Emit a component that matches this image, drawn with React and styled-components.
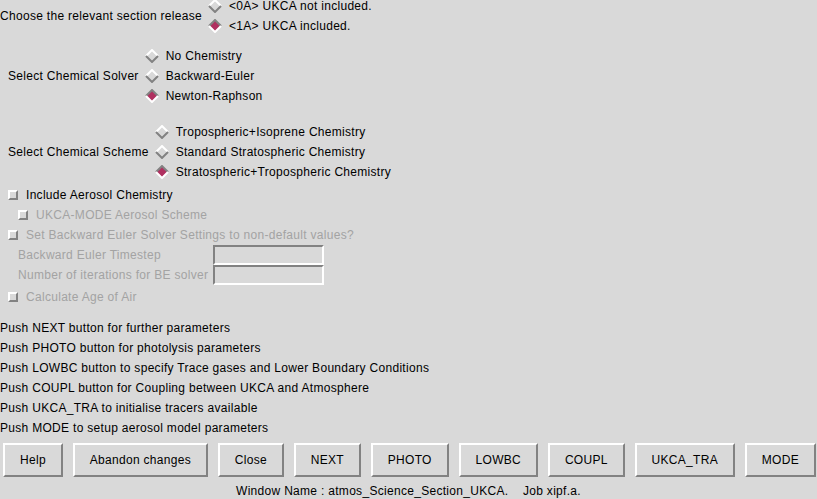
import styled, { createGlobalStyle } from "styled-components"

const Global = createGlobalStyle`
	html, body {
		margin: 0;
		padding: 0;
		background: #d9d9d9;
	}
	body {
		font-family: "Liberation Sans", Arial, sans-serif;
		font-size: 12px;
		letter-spacing: 0.3px;
		color: #000;
		overflow: hidden;
	}
`

const Page = styled.div`
	width: 817px;
	height: 499px;
	display: flex;
	flex-direction: column;
	overflow: hidden;
`

const Group = styled.div`
	display: flex;
	align-items: center;
	padding-left: ${(p) => p.$indent || 0}px;
	margin-top: ${(p) => p.$top || 0}px;
`

const GroupLabel = styled.div`
	margin-right: 6px;
	white-space: nowrap;
`

const RadioList = styled.div`
	display: flex;
	flex-direction: column;
`

const RadioRow = styled.div`
	height: 20px;
	display: flex;
	align-items: center;
	gap: 7px;
	white-space: nowrap;
`

const Checks = styled.div`
	display: flex;
	flex-direction: column;
	margin-top: 3px;
`

const CheckRow = styled.div`
	height: 20px;
	display: flex;
	align-items: center;
	gap: 8px;
	padding-left: ${(p) => p.$indent || 8}px;
	margin-top: ${(p) => p.$top || 0}px;
	color: ${(p) => (p.$disabled ? "#a3a3a3" : "#000")};
	white-space: nowrap;
`

const Box = styled.span`
	width: 6px;
	height: 6px;
	border: 2px solid;
	border-color: #fff #828282 #828282 #fff;
	background: #d9d9d9;
	flex: none;
`

const EntryGrid = styled.div`
	display: grid;
	grid-template-columns: 195px 111px;
	padding-left: 18px;
	color: #a3a3a3;
`

const EntryLabel = styled.div`
	height: 20px;
	line-height: 20px;
	white-space: nowrap;
`

const Entry = styled.div`
	height: 16px;
	border: 2px solid;
	border-color: #828282 #fff #fff #828282;
`

const Notes = styled.div`
	margin-top: 11px;
	display: flex;
	flex-direction: column;
`

const Note = styled.div`
	height: 20px;
	line-height: 20px;
	white-space: nowrap;
`

const ButtonBar = styled.div`
	display: flex;
	justify-content: space-between;
	padding: 0 1px 0 3px;
	margin-top: 5px;
`

const Button = styled.button`
	height: 34px;
	padding: 0 15px;
	border: 2px solid;
	border-color: #fff #828282 #828282 #fff;
	background: #d9d9d9;
	font-family: "Liberation Sans", Arial, sans-serif;
	font-size: 12px;
	letter-spacing: 0.3px;
	color: #000;
	white-space: nowrap;
`

const Status = styled.div`
	margin-top: 7px;
	text-align: center;
	white-space: pre;
	line-height: 14px;
`

function Diamond({ on }) {
	const top = on ? "#828282" : "#fff"
	const bottom = on ? "#fff" : "#828282"
	return (
		<svg width="14" height="14" viewBox="0 0 14 14" style={{ flex: "none" }}>
			<polygon points="7,1 13,7 7,13 1,7" fill={on ? "#b03060" : "#d9d9d9"} />
			<polyline points="1,7 7,1 13,7" fill="none" stroke={top} strokeWidth="2" />
			<polyline points="1,7 7,13 13,7" fill="none" stroke={bottom} strokeWidth="2" />
		</svg>
	)
}

function RadioGroup({ label, indent, top, items, selected }) {
	return (
		<Group $indent={indent} $top={top}>
			<GroupLabel>{label}</GroupLabel>
			<RadioList>
				{items.map((t, i) => (
					<RadioRow key={t}>
						<Diamond on={i === selected} />
						{t}
					</RadioRow>
				))}
			</RadioList>
		</Group>
	)
}

const buttons = ["Help", "Abandon changes", "Close", "NEXT", "PHOTO", "LOWBC", "COUPL", "UKCA_TRA", "MODE"]

const notes = [
	"Push NEXT button for further parameters",
	"Push PHOTO button for photolysis parameters",
	"Push LOWBC button to specify Trace gases and Lower Boundary Conditions",
	"Push COUPL button for Coupling between UKCA and Atmosphere",
	"Push UKCA_TRA to initialise tracers available",
	"Push MODE to setup aerosol model parameters",
]

export default function App() {
	return (
		<Page>
			<Global />
			<RadioGroup
				label="Choose the relevant section release"
				indent={0}
				top={-4}
				items={["<0A> UKCA not included.", "<1A> UKCA included."]}
				selected={1}
			/>
			<RadioGroup
				label="Select Chemical Solver"
				indent={8}
				top={10}
				items={["No Chemistry", "Backward-Euler", "Newton-Raphson"]}
				selected={2}
			/>
			<RadioGroup
				label="Select Chemical Scheme"
				indent={8}
				top={16}
				items={[
					"Tropospheric+Isoprene Chemistry",
					"Standard Stratospheric Chemistry",
					"Stratospheric+Tropospheric Chemistry",
				]}
				selected={2}
			/>
			<Checks>
				<CheckRow>
					<Box />
					Include Aerosol Chemistry
				</CheckRow>
				<CheckRow $indent={18} $disabled>
					<Box />
					UKCA-MODE Aerosol Scheme
				</CheckRow>
				<CheckRow $disabled>
					<Box />
					Set Backward Euler Solver Settings to non-default values?
				</CheckRow>
				<EntryGrid>
					<EntryLabel>Backward Euler Timestep</EntryLabel>
					<Entry />
					<EntryLabel>Number of iterations for BE solver</EntryLabel>
					<Entry />
				</EntryGrid>
				<CheckRow $disabled $top={2}>
					<Box />
					Calculate Age of Air
				</CheckRow>
			</Checks>
			<Notes>
				{notes.map((n) => (
					<Note key={n}>{n}</Note>
				))}
			</Notes>
			<ButtonBar>
				{buttons.map((b) => (
					<Button key={b}>{b}</Button>
				))}
			</ButtonBar>
			<Status>{"Window Name : atmos_Science_Section_UKCA.    Job xipf.a."}</Status>
		</Page>
	)
}
